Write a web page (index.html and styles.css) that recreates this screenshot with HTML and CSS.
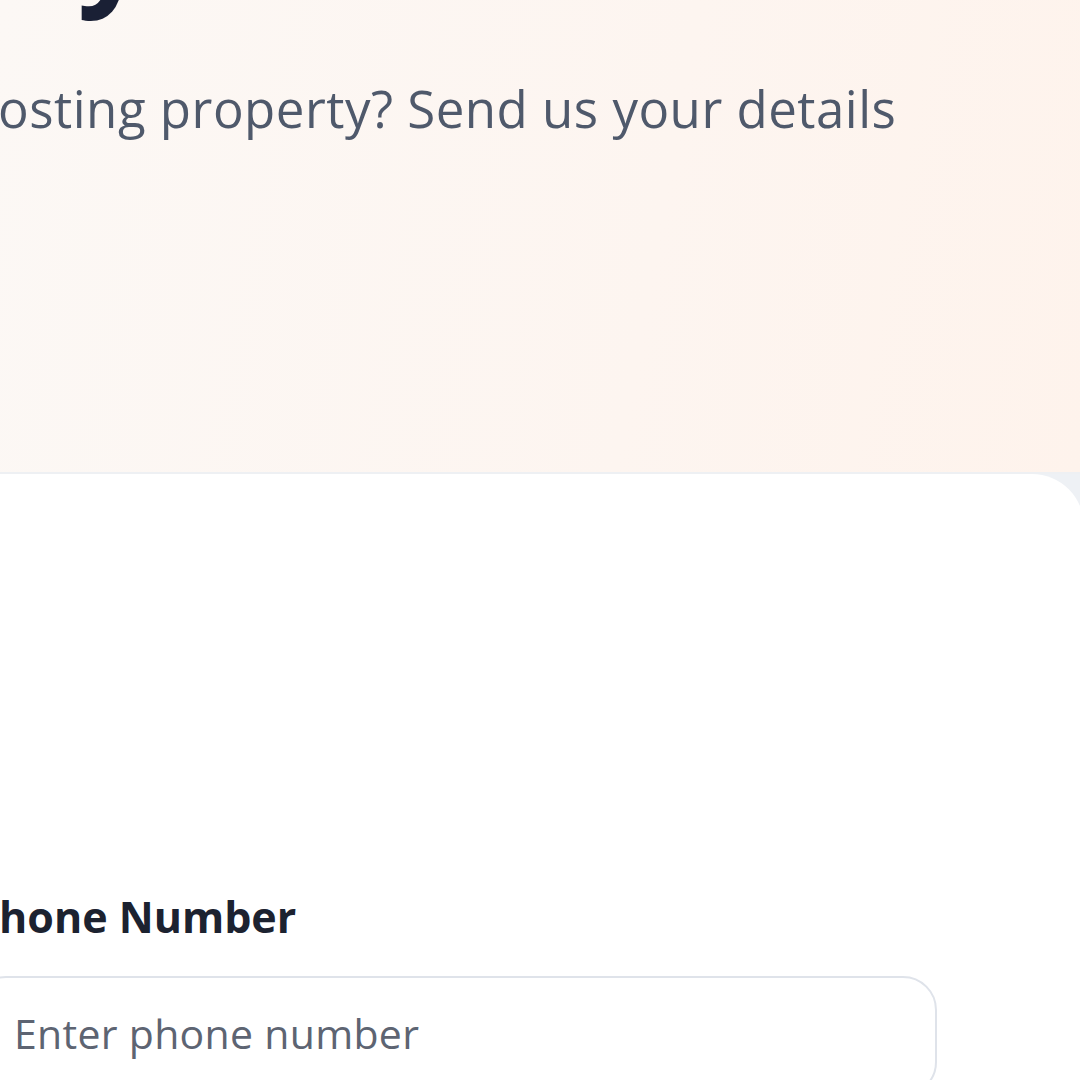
FILE: index.html
```html
<!DOCTYPE html>
<html>
<head>
<meta charset="utf-8">
<link rel="stylesheet" href="styles.css">
</head>
<body>
<div class="page">
  <section class="hero">
    <div class="hero-inner">
      <h1 class="title">Host with us<br>today</h1>
      <p class="subtitle">Own a hosting property? Send us your details</p>
    </div>
  </section>
  <section class="card">
    <div class="field">
      <label class="label">Phone Number</label>
      <div class="input"><span class="placeholder">Enter phone number</span></div>
    </div>
  </section>
</div>
</body>
</html>
```
FILE: styles.css
```css
html, body {
  margin: 0;
  padding: 0;
  width: 1080px;
  height: 1080px;
  overflow: hidden;
  background: #eef1f5;
  font-family: "Open Sans", "Noto Sans", sans-serif;
}
.page {
  display: flex;
  flex-direction: column;
}
.hero {
  height: 472px;
  background: linear-gradient(100deg, #fcf8f5 0%, #fdf5f0 60%, #fef3ec 100%);
  border-bottom: 2px solid #eef0f3;
  overflow: hidden;
}
.hero-inner {
  margin-left: -202px;
  margin-top: -235px;
  display: flex;
  flex-direction: column;
}
.title {
  margin: 0;
  font-size: 122px;
  line-height: 120px;
  font-weight: 700;
  color: #1a2035;
  white-space: nowrap;
}
.subtitle {
  margin: 0;
  margin-top: 73px;
  font-size: 51px;
  line-height: 60px;
  letter-spacing: 0.5px;
  color: #4f596b;
  white-space: nowrap;
}
.card {
  background: #ffffff;
  margin-left: -200px;
  margin-right: -4px;
  border-top-right-radius: 52px;
  height: 700px;
  padding-top: 418px;
  box-sizing: border-box;
}
.field {
  display: flex;
  flex-direction: column;
  align-items: flex-start;
  padding-left: 172px;
}
.label {
  font-size: 43px;
  font-weight: 700;
  color: #1c2230;
  line-height: 50px;
  white-space: nowrap;
}
.input {
  margin-top: 34px;
  width: 965px;
  height: 120px;
  border: 2px solid #dfe3ea;
  border-radius: 34px;
  display: flex;
  align-items: flex-start;
  padding-top: 27px;
  box-sizing: border-box;
  padding-left: 40px;
}
.placeholder {
  font-size: 41px;
  letter-spacing: 0.3px;
  color: #5d6472;
  white-space: nowrap;
}
```
